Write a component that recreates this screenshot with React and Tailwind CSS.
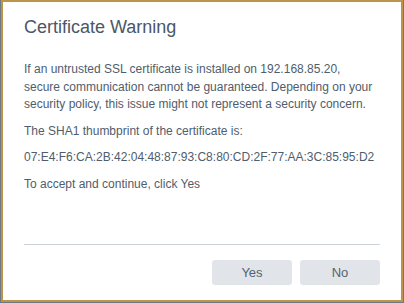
export default function App() {
    return (
        <div className="w-[404px] h-[303px] bg-[#6d7a84] pl-px pr-px pb-px" style={{ fontFamily: '"Liberation Sans", Arial, sans-serif' }}>
            <div className="w-full h-full border-2 border-[#bd9449] bg-white flex flex-col px-[21px]">
                <h2 className="text-[18px] leading-none text-[#4a5766] mt-[16px]">Certificate Warning</h2>

                <div className="mt-[25px] text-[12px] leading-[17.5px] text-[#4f5d6c]">
                    <p>
                        If an untrusted SSL certificate is installed on 192.168.85.20,<br />
                        secure communication cannot be guaranteed. Depending on your<br />
                        security policy, this issue might not represent a security concern.
                    </p>
                    <p className="mt-[9px]">The SHA1 thumbprint of the certificate is:</p>
                    <p className="mt-[9px]">07:E4:F6:CA:2B:42:04:48:87:93:C8:80:CD:2F:77:AA:3C:85:95:D2</p>
                    <p className="mt-[9px]">To accept and continue, click Yes</p>
                </div>

                <div className="mt-auto border-t border-[#cdd3da]" />
                <div className="flex justify-end gap-2 mt-[15px] mb-[15px]">
                    <button className="w-[80px] h-[25px] rounded-[3px] bg-[#e1e5ea] text-[13px] text-[#56626f]">Yes</button>
                    <button className="w-[80px] h-[25px] rounded-[3px] bg-[#e1e5ea] text-[13px] text-[#56626f]">No</button>
                </div>
            </div>
        </div>
    );
}
